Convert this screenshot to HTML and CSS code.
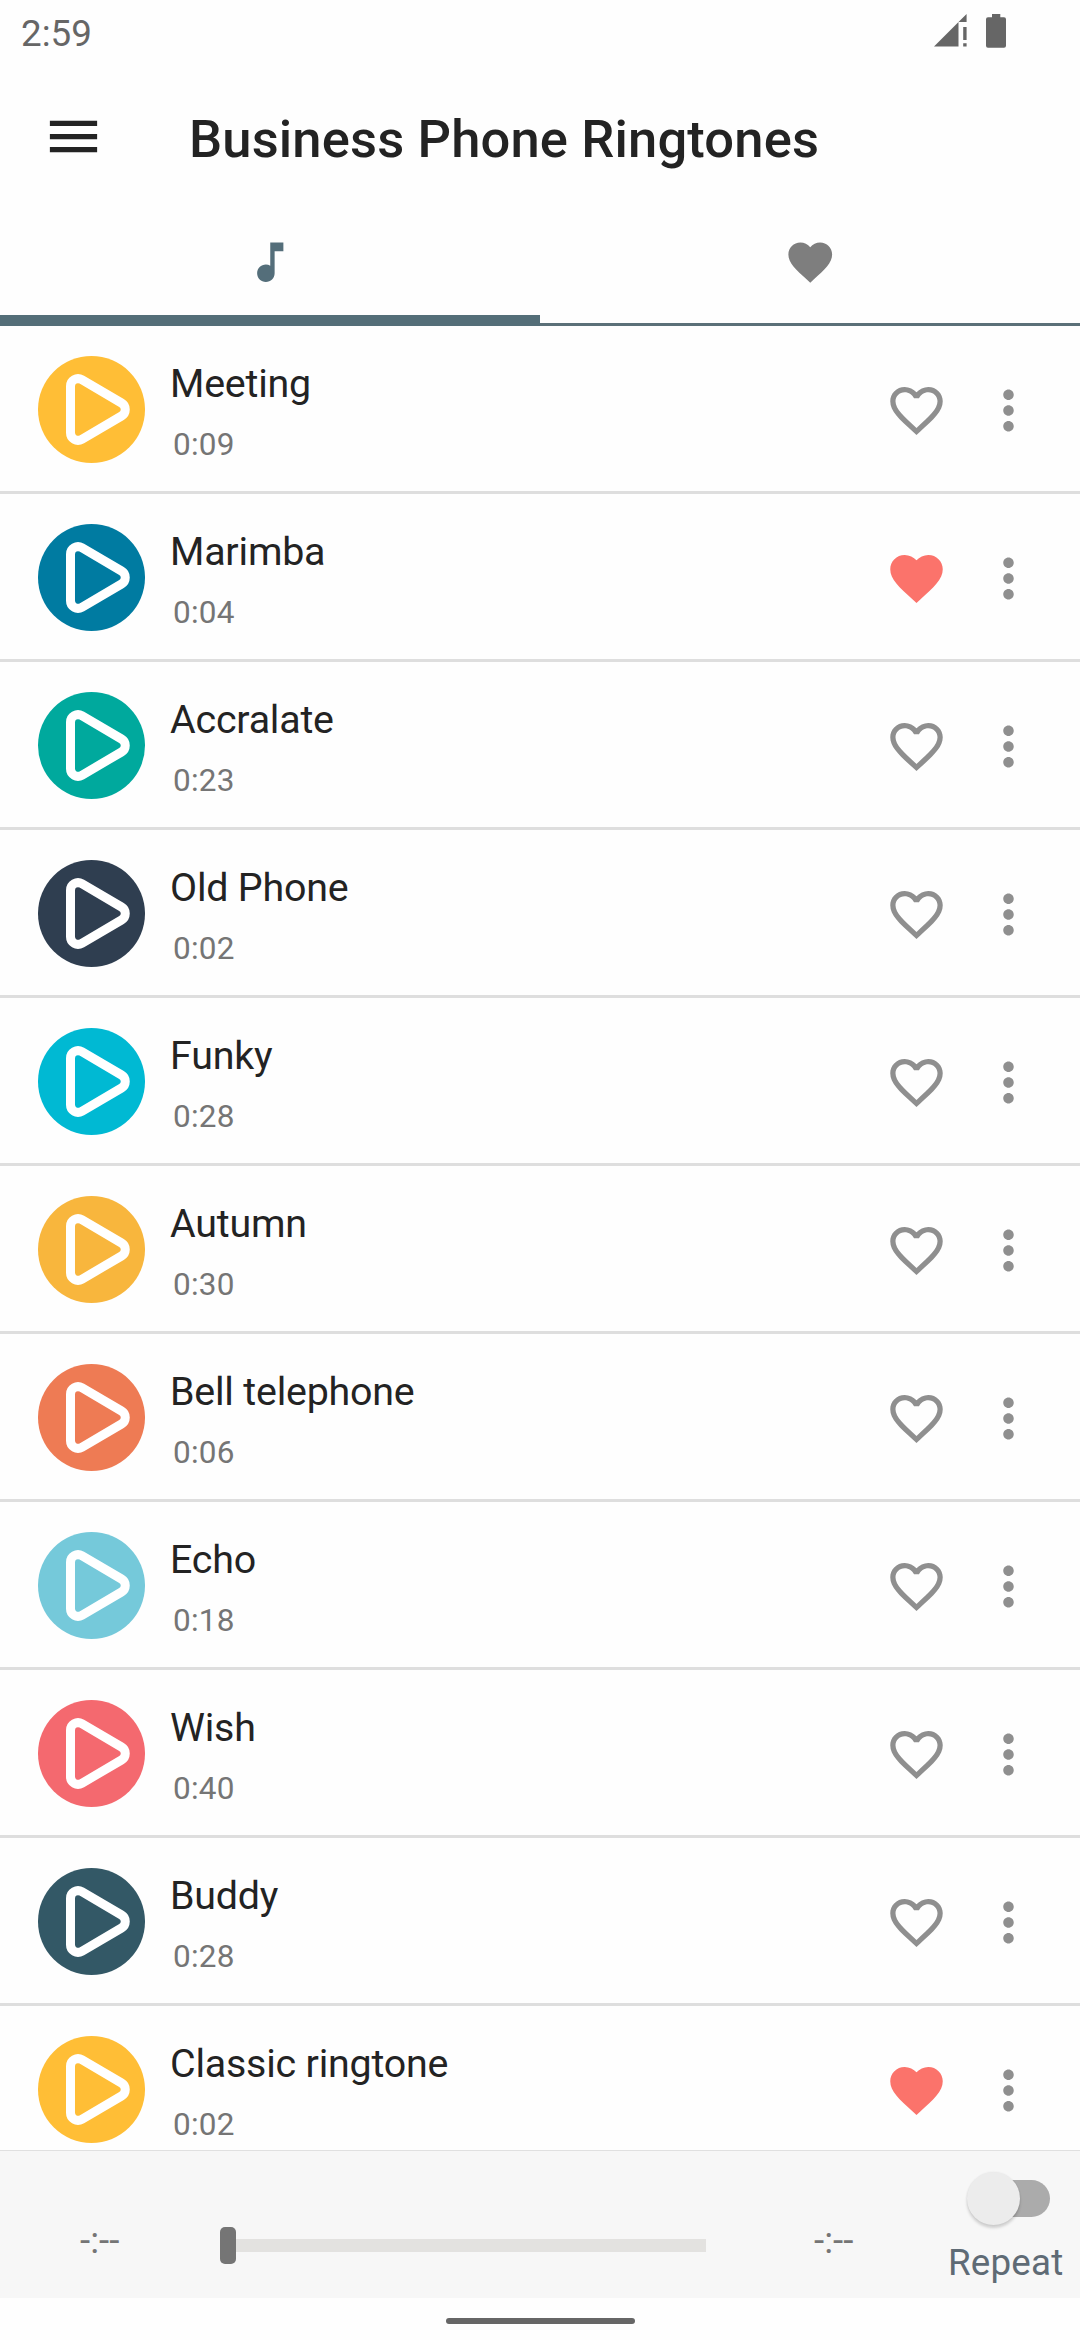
FILE: index.html
```html
<!DOCTYPE html>
<html lang="en">
<head>
<meta charset="utf-8">
<title>Business Phone Ringtones</title>
<link rel="stylesheet" href="styles.css">
</head>
<body>
<svg class="sprite" aria-hidden="true">
  <symbol id="play" viewBox="0 0 107 107">
    <circle cx="53.5" cy="53.5" r="53.5" fill="currentColor"/>
    <path d="M43.8 23.7L83.5 47A7.5 7.5 0 0 1 83.5 60L43.8 83.3A7.5 7.5 0 0 1 32.5 76.8V30.2A7.5 7.5 0 0 1 43.8 23.7z" fill="none" stroke="#fff" stroke-width="9"/>
  </symbol>
  <symbol id="heart" viewBox="0 0 24 24"><path fill="currentColor" d="M12 21.35l-1.45-1.32C5.4 15.36 2 12.28 2 8.5 2 5.42 4.42 3 7.5 3c1.74 0 3.41.81 4.5 2.09C13.09 3.81 14.76 3 16.5 3 19.58 3 22 5.42 22 8.5c0 3.78-3.4 6.86-8.55 11.54L12 21.35z"/></symbol>
  <symbol id="heart-outline" viewBox="0 0 24 24"><path fill="currentColor" d="M16.5 3c-1.74 0-3.41.81-4.5 2.09C10.91 3.81 9.24 3 7.5 3 4.42 3 2 5.42 2 8.5c0 3.78 3.4 6.86 8.55 11.54L12 21.35l1.45-1.32C18.6 15.36 22 12.28 22 8.5 22 5.42 19.58 3 16.5 3zm-4.4 15.55l-.1.1-.1-.1C7.14 14.24 4 11.39 4 8.5 4 6.5 5.5 5 7.5 5c1.54 0 3.04.99 3.57 2.36h1.87C13.46 5.99 14.96 5 16.5 5c2 0 3.5 1.5 3.5 3.5 0 2.89-3.14 5.74-7.9 10.05z"/></symbol>
  <symbol id="more" viewBox="0 0 24 24"><path fill="currentColor" d="M12 8c1.1 0 2-.9 2-2s-.9-2-2-2-2 .9-2 2 .9 2 2 2zm0 2c-1.1 0-2 .9-2 2s.9 2 2 2 2-.9 2-2-.9-2-2-2zm0 6c-1.1 0-2 .9-2 2s.9 2 2 2 2-.9 2-2-.9-2-2-2z"/></symbol>
</svg>

<div class="screen">
  <div class="status">
    <span class="clock">2:59</span>
    <svg class="signal" viewBox="0 0 33 33"><path fill="#666" d="M0 32.5L24.5 8V32.5zM24.5 8L32.6 0V8zM29.2 13h3.4v13h-3.4zM29.2 29.2h3.4v3.3h-3.4z"/></svg>
    <svg class="battery" viewBox="0 0 20 34"><path fill="#666" d="M6 0h8.3v3.2H18a2 2 0 0 1 2 2V31.700a2 2 0 0 1-2 2H2a2 2 0 0 1-2-2V5.200a2 2 0 0 1 2-2H6z"/></svg>
  </div>

  <header class="appbar">
    <svg class="menu" viewBox="0 0 24 24"><path fill="#232323" d="M3 18h18v-2H3v2zm0-5h18v-2H3v2zm0-7v2h18V6H3z"/></svg>
    <h1 class="heading">Business Phone Ringtones</h1>
  </header>

  <nav class="tabs">
    <div class="tab tab-active"><svg class="tab-icon" viewBox="0 0 24 24"><path fill="currentColor" d="M12 3v10.55c-.59-.34-1.27-.55-2-.55-2.21 0-4 1.790-4 4s1.790 4 4 4 4-1.790 4-4V7h4V3h-6z"/></svg></div>
    <div class="tab"><svg class="tab-icon"><use href="#heart"/></svg></div>
  </nav>

  <main class="list">
    <div class="row"><svg class="play c-amber"><use href="#play"/></svg><div class="info"><div class="name">Meeting</div><div class="length">0:09</div></div><svg class="icon"><use href="#heart-outline"/></svg><svg class="icon more"><use href="#more"/></svg></div>
    <div class="row"><svg class="play c-blue"><use href="#play"/></svg><div class="info"><div class="name">Marimba</div><div class="length">0:04</div></div><svg class="icon liked"><use href="#heart"/></svg><svg class="icon more"><use href="#more"/></svg></div>
    <div class="row"><svg class="play c-teal"><use href="#play"/></svg><div class="info"><div class="name">Accralate</div><div class="length">0:23</div></div><svg class="icon"><use href="#heart-outline"/></svg><svg class="icon more"><use href="#more"/></svg></div>
    <div class="row"><svg class="play c-navy"><use href="#play"/></svg><div class="info"><div class="name">Old Phone</div><div class="length">0:02</div></div><svg class="icon"><use href="#heart-outline"/></svg><svg class="icon more"><use href="#more"/></svg></div>
    <div class="row"><svg class="play c-cyan"><use href="#play"/></svg><div class="info"><div class="name">Funky</div><div class="length">0:28</div></div><svg class="icon"><use href="#heart-outline"/></svg><svg class="icon more"><use href="#more"/></svg></div>
    <div class="row"><svg class="play c-gold"><use href="#play"/></svg><div class="info"><div class="name">Autumn</div><div class="length">0:30</div></div><svg class="icon"><use href="#heart-outline"/></svg><svg class="icon more"><use href="#more"/></svg></div>
    <div class="row"><svg class="play c-orange"><use href="#play"/></svg><div class="info"><div class="name">Bell telephone</div><div class="length">0:06</div></div><svg class="icon"><use href="#heart-outline"/></svg><svg class="icon more"><use href="#more"/></svg></div>
    <div class="row"><svg class="play c-sky"><use href="#play"/></svg><div class="info"><div class="name">Echo</div><div class="length">0:18</div></div><svg class="icon"><use href="#heart-outline"/></svg><svg class="icon more"><use href="#more"/></svg></div>
    <div class="row"><svg class="play c-red"><use href="#play"/></svg><div class="info"><div class="name">Wish</div><div class="length">0:40</div></div><svg class="icon"><use href="#heart-outline"/></svg><svg class="icon more"><use href="#more"/></svg></div>
    <div class="row"><svg class="play c-slate"><use href="#play"/></svg><div class="info"><div class="name">Buddy</div><div class="length">0:28</div></div><svg class="icon"><use href="#heart-outline"/></svg><svg class="icon more"><use href="#more"/></svg></div>
    <div class="row"><svg class="play c-amber"><use href="#play"/></svg><div class="info"><div class="name">Classic ringtone</div><div class="length">0:02</div></div><svg class="icon liked"><use href="#heart"/></svg><svg class="icon more"><use href="#more"/></svg></div>
  </main>

  <footer class="player">
    <div class="time elapsed">-:--</div>
    <div class="slider"><div class="thumb"></div><div class="track"></div></div>
    <div class="time total">-:--</div>
    <div class="repeat">
      <div class="switch"><div class="knob"></div></div>
      <div class="repeat-label">Repeat</div>
    </div>
  </footer>

  <div class="gesture"><div class="pill"></div></div>
</div>
</body>
</html>
```
FILE: styles.css
```css
* { box-sizing: border-box; }

body {
  margin: 0;
  background: #fefefe;
  font-family: Roboto, "Noto Sans", sans-serif;
  color: #232323;
}

svg { display: block; flex: none; }

.sprite { display: none; }

.screen {
  display: flex;
  flex-direction: column;
  width: 1080px;
  height: 2340px;
  overflow: hidden;
}

.status {
  display: flex;
  align-items: flex-start;
  height: 63px;
  padding: 11.6px 74px 0 21px;
}

.clock {
  flex: 1;
  font-size: 36.75px;
  line-height: 43px;
  color: #666;
}

.signal { width: 33px; height: 33px; margin: 2.6px 19px 0 0; }
.battery { width: 20px; height: 34px; margin-top: 2.6px; }

.appbar {
  display: flex;
  align-items: center;
  height: 147px;
  padding-left: 42px;
}

.menu { width: 63px; height: 63px; }

.heading {
  margin: 0 0 0 84px;
  padding-top: 4px;
  font-size: 52.5px;
  line-height: 62px;
  font-weight: 500;
  letter-spacing: .15px;
}

.tabs { display: flex; height: 116px; }

.tab {
  flex: 1;
  display: flex;
  justify-content: center;
  padding-top: 26px;
  color: #7e7e7e;
  border-bottom: 3px solid #5b7078;
}

.tab-active {
  color: #546e7a;
  border-bottom: 11px solid #546e78;
}

.tab-icon { width: 52.5px; height: 52.5px; }

.list { height: 1824px; overflow: hidden; }

.row {
  display: flex;
  align-items: flex-start;
  height: 168px;
  padding: 0 40px 0 38px;
  border-bottom: 3px solid #dedede;
}

.play { width: 107px; height: 107px; margin-top: 30px; }

.c-amber { color: #ffbe36; }
.c-blue { color: #007ba1; }
.c-teal { color: #00a99d; }
.c-navy { color: #2f3e50; }
.c-cyan { color: #00b9d3; }
.c-gold { color: #f8b63d; }
.c-orange { color: #ee7b54; }
.c-sky { color: #75c9da; }
.c-red { color: #f4696f; }
.c-slate { color: #335866; }

.info { flex: 1; padding: 35px 0 0 25px; }

.name {
  font-size: 39.375px;
  line-height: 46px;
  letter-spacing: -.2px;
}

.length {
  margin: 19px 0 0 3px;
  font-size: 31.5px;
  line-height: 37px;
  letter-spacing: .2px;
  color: #757575;
}

.icon {
  width: 63px;
  height: 63px;
  margin-top: 53px;
  color: #8f8f8f;
}

.more { margin-left: 29px; }
.liked { color: #fb736b; }

.player {
  display: flex;
  align-items: flex-start;
  height: 148px;
  background: #f7f7f7;
  border-top: 1px solid #e0e0e0;
}

.time {
  width: 60px;
  margin-top: 68px;
  font-size: 36.75px;
  line-height: 43px;
  color: #757575;
}

.elapsed { margin-left: 80px; }
.total { margin-left: 108px; }

.slider {
  display: flex;
  align-items: center;
  width: 486px;
  height: 37px;
  margin: 76px 0 0 80px;
}

.thumb {
  width: 16px;
  height: 37px;
  border-radius: 5px;
  background: #757575;
}

.track { flex: 1; height: 13px; background: #e3e2e0; }

.repeat { margin: 29px 0 0 74px; }

.switch {
  display: flex;
  align-items: center;
  width: 74px;
  height: 37px;
  margin-left: 28px;
  border-radius: 19px;
  background: #ababab;
}

.knob {
  flex: none;
  width: 53px;
  height: 53px;
  margin-left: -9px;
  border-radius: 50%;
  background: #ececec;
  box-shadow: 0 3px 3px rgba(0, 0, 0, .16), 0 0 2px rgba(0, 0, 0, .08);
}

.repeat-label {
  margin-top: 24px;
  font-size: 36.75px;
  line-height: 43px;
  letter-spacing: .2px;
  color: #5f6b75;
}

.gesture {
  flex: 1;
  display: flex;
  justify-content: center;
  padding-top: 20px;
}

.pill { width: 189px; height: 6px; border-radius: 3px; background: #666; }
```
